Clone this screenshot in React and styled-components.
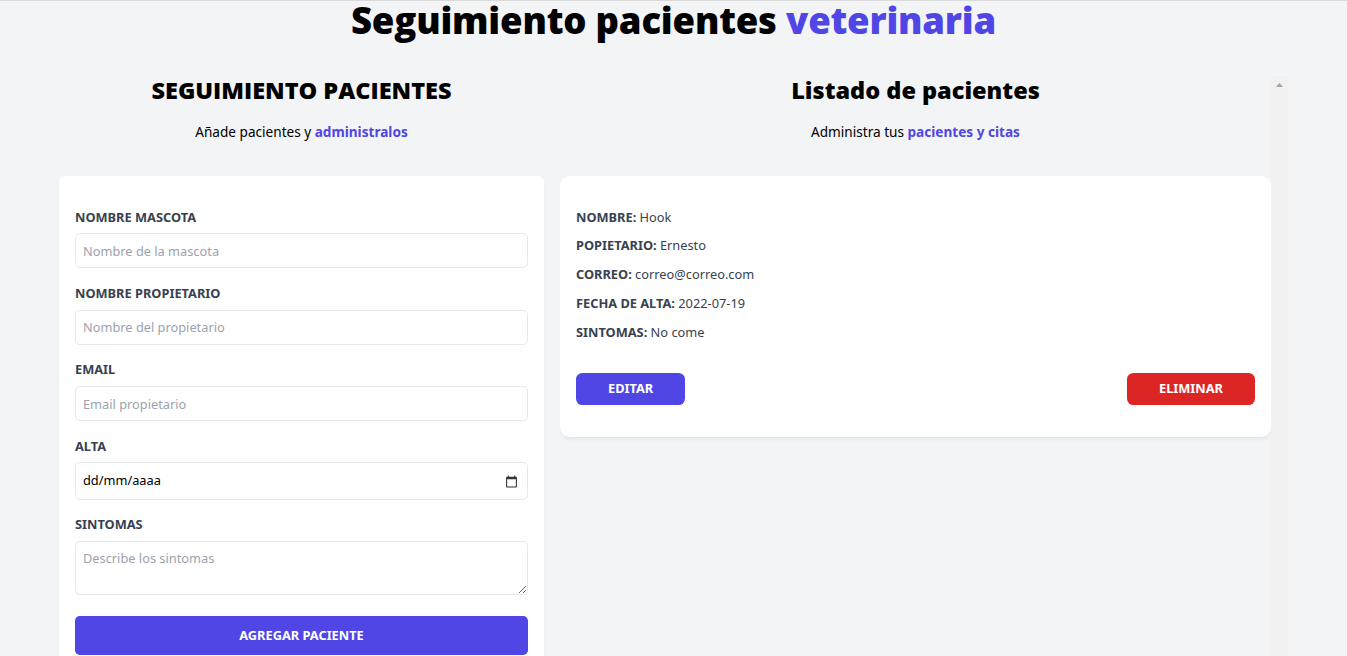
import React from "react";
import styled, { createGlobalStyle } from "styled-components";

const GlobalStyle = createGlobalStyle`
  html, body {
    margin: 0;
    padding: 0;
    background: #f3f4f6;
    overflow: hidden;
  }
  body {
    font-family: "Noto Sans", "Open Sans", Arial, sans-serif;
    color: #000;
  }
  *, *::before, *::after { box-sizing: border-box; }
`;

const Page = styled.div`
  border-top: 1px solid #dadada;
  min-height: 100vh;
`;

const Title = styled.h1`
  margin: 0 auto;
  width: 66.666%;
  text-align: center;
  font-family: "Open Sans", "Noto Sans", sans-serif;
  font-weight: 800;
  font-size: 36.5px;
  line-height: 38.4px;
  letter-spacing: -0.2px;
`;

const Accent = styled.span`
  color: #4f46e5;
  font-weight: ${(p) => (p.$bold ? 700 : "inherit")};
`;

const Columns = styled.div`
  width: 1229px;
  margin: 37px auto 0;
  display: flex;
  gap: 16px;
`;

const LeftColumn = styled.section`
  width: 485px;
  flex: none;
`;

const RightColumn = styled.section`
  width: 728px;
  flex: none;
  height: 100vh;
  display: flex;
`;

const RightContent = styled.div`
  flex: 1;
  min-width: 0;
  overflow-y: auto;
  scrollbar-width: none;
`;

const ScrollTrack = styled.div`
  width: 17px;
  flex: none;
  background: #f1f1f1;
`;

const ScrollArrow = styled.svg`
  display: block;
  width: 17px;
  height: 17px;
  fill: #a3a3a3;
`;

const SectionTitle = styled.h2`
  margin: 0;
  text-align: center;
  font-family: "Open Sans", "Noto Sans", sans-serif;
  font-weight: 800;
  font-size: 23.5px;
  line-height: 28.8px;
`;

const SectionText = styled.p`
  margin: 16px 0 32px;
  text-align: center;
  font-size: 13.6px;
  line-height: 22.4px;
`;

const FormCard = styled.form`
  background: #fff;
  border-radius: 6.4px;
  padding: 32px 16px;
  margin-bottom: 32px;
  box-shadow: 0 3px 5px -1px rgba(0, 0, 0, 0.06), 0 2px 3px -2px rgba(0, 0, 0, 0.06);
`;

const Field = styled.div`
  margin-bottom: 15.6px;
`;

const Label = styled.label`
  display: block;
  color: #374151;
  text-transform: uppercase;
  font-weight: 700;
  font-size: 12.8px;
  line-height: 19.2px;
`;

const fieldBase = `
  display: block;
  width: 100%;
  margin-top: 6.4px;
  border: 1px solid #e5e7eb;
  border-radius: 4.8px;
  padding: 7px;
  font-family: inherit;
  font-size: 12.8px;
  line-height: 19.2px;
  color: #111827;
  background: #fff;
  outline: none;
  &::placeholder { color: #9ca3af; }
`;

const TextInput = styled.input`
  ${fieldBase}
  height: 35.2px;
`;

const TextArea = styled.textarea`
  ${fieldBase}
  height: 54.4px;
  resize: vertical;
`;

const DateBox = styled.div`
  margin-top: 6.4px;
  height: 37.4px;
  display: flex;
  align-items: center;
  border: 1px solid #e5e7eb;
  border-radius: 4.8px;
  background: #fff;
  padding: 0 9px 0 7px;
`;

const DateText = styled.input`
  flex: 1;
  border: none;
  outline: none;
  padding: 0;
  font-family: inherit;
  font-size: 12.8px;
  line-height: 19.2px;
  background: transparent;
  &::placeholder { color: #000; }
`;

const CalendarIcon = styled.svg`
  width: 13px;
  height: 13px;
  flex: none;
  fill: #333;
`;

const SubmitButton = styled.button`
  display: block;
  width: 100%;
  margin-top: 21px;
  border: none;
  border-radius: 4.8px;
  background: #4f46e5;
  color: #fff;
  padding: 9.6px;
  font-family: inherit;
  font-size: 12.8px;
  line-height: 19.2px;
  font-weight: 700;
  text-transform: uppercase;
  cursor: pointer;
`;

const PatientCard = styled.article`
  background: #fff;
  border-radius: 9.6px;
  padding: 32px 16px;
  margin-bottom: 32px;
  box-shadow: 0 3px 5px -1px rgba(0, 0, 0, 0.06), 0 2px 3px -2px rgba(0, 0, 0, 0.06);
`;

const InfoRow = styled.p`
  margin: 0 0 9.6px;
  color: #374151;
  font-weight: 700;
  text-transform: uppercase;
  font-size: 12.8px;
  line-height: 19.2px;
`;

const InfoValue = styled.span`
  font-weight: 400;
  text-transform: none;
`;

const Actions = styled.div`
  display: flex;
  justify-content: space-between;
  margin-top: 31px;
`;

const ActionButton = styled.button`
  height: 32px;
  border: none;
  border-radius: 6.4px;
  background: ${(p) => (p.$variant === "danger" ? "#dc2626" : "#4f46e5")};
  color: #fff;
  padding: 0 32px;
  font-family: inherit;
  font-size: 12.8px;
  line-height: 19.2px;
  font-weight: 700;
  text-transform: uppercase;
  cursor: pointer;
`;

const fields = [
  { id: "mascota", label: "Nombre Mascota", placeholder: "Nombre de la mascota" },
  { id: "propietario", label: "Nombre Propietario", placeholder: "Nombre del propietario" },
  { id: "email", label: "Email", placeholder: "Email propietario", type: "email" },
];

const patient = [
  ["Nombre", "Hook"],
  ["Popietario", "Ernesto"],
  ["Correo", "correo@correo.com"],
  ["Fecha de alta", "2022-07-19"],
  ["Sintomas", "No come"],
];

export default function App() {
  return (
    <Page>
      <GlobalStyle />
      <Title>
        Seguimiento pacientes <Accent>veterinaria</Accent>
      </Title>
      <Columns>
        <LeftColumn>
          <SectionTitle>SEGUIMIENTO PACIENTES</SectionTitle>
          <SectionText>
            Añade pacientes y <Accent $bold>administralos</Accent>
          </SectionText>
          <FormCard onSubmit={(e) => e.preventDefault()}>
            {fields.map((f) => (
              <Field key={f.id}>
                <Label htmlFor={f.id}>{f.label}</Label>
                <TextInput id={f.id} type={f.type || "text"} placeholder={f.placeholder} />
              </Field>
            ))}
            <Field>
              <Label htmlFor="alta">Alta</Label>
              <DateBox>
                <DateText id="alta" type="text" placeholder="dd/mm/aaaa" />
                <CalendarIcon viewBox="0 0 24 24">
                  <path d="M20 3h-1V1h-2v2H7V1H5v2H4c-1.1 0-2 .9-2 2v16c0 1.1.9 2 2 2h16c1.1 0 2-.9 2-2V5c0-1.1-.9-2-2-2zm0 18H4V8h16v13z" />
                </CalendarIcon>
              </DateBox>
            </Field>
            <Field>
              <Label htmlFor="sintomas">Sintomas</Label>
              <TextArea id="sintomas" rows={2} placeholder="Describe los sintomas" />
            </Field>
            <SubmitButton type="submit">Agregar Paciente</SubmitButton>
          </FormCard>
        </LeftColumn>
        <RightColumn>
          <RightContent>
            <SectionTitle>Listado de pacientes</SectionTitle>
            <SectionText>
              Administra tus <Accent $bold>pacientes y citas</Accent>
            </SectionText>
            <PatientCard>
              {patient.map(([k, v]) => (
                <InfoRow key={k}>
                  {k}: <InfoValue>{v}</InfoValue>
                </InfoRow>
              ))}
              <Actions>
                <ActionButton type="button">Editar</ActionButton>
                <ActionButton type="button" $variant="danger">Eliminar</ActionButton>
              </Actions>
            </PatientCard>
          </RightContent>
          <ScrollTrack aria-hidden="true">
            <ScrollArrow viewBox="0 0 17 17">
              <path d="M5 11h7L8.5 7z" />
            </ScrollArrow>
          </ScrollTrack>
        </RightColumn>
      </Columns>
    </Page>
  );
}
